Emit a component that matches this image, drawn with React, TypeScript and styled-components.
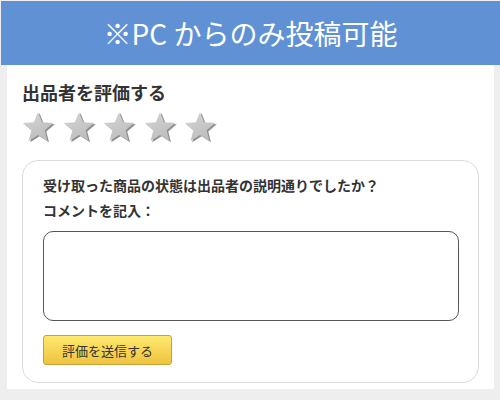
import React from 'react'
import styled, { createGlobalStyle } from 'styled-components'

const GlobalStyle = createGlobalStyle`
  html, body {
    margin: 0;
    padding: 0;
    background-color: #eeeeee;
  }
  body {
    font-family: 'Noto Sans CJK JP', 'Noto Sans', sans-serif;
    color: #333333;
  }
  #root {
    padding-top: 1px;
  }
`

const Header = styled.div`
  margin-left: 1px;
  height: 64px;
  background-color: #6091d4;
  color: #ffffff;
  font-size: 28px;
  line-height: 64px;
  text-align: center;
  letter-spacing: 0;
`

const Panel = styled.div`
  margin: 0 6px 0 7px;
  padding: 15px 15px 6px 15px;
  background-color: #ffffff;
`

const Title = styled.h2`
  margin: 0;
  font-size: 18px;
  line-height: 24px;
  font-weight: bold;
  color: #333333;
`

const Stars = styled.div`
  display: flex;
  gap: 6.5px;
  margin-top: 6px;
  height: 34px;
  align-items: center;
`

const StarButton = styled.button`
  background: transparent;
  border: none;
  padding: 0;
  width: 34px;
  height: 32px;
  cursor: pointer;
  display: flex;
`

const Card = styled.div`
  margin-top: 16px;
  border: 1px solid #dcdcdc;
  border-radius: 16px;
  padding: 14px 19px 17px 20px;
`

const Label = styled.p`
  margin: 0;
  font-size: 14px;
  line-height: 20px;
  font-weight: bold;
  color: #333333;

  & + & {
    margin-top: 5px;
  }
`

const Comment = styled.textarea`
  display: block;
  box-sizing: border-box;
  width: 100%;
  height: 90px;
  margin-top: 11px;
  border: 1px solid #555555;
  border-radius: 10px;
  resize: none;
  outline: none;
  padding: 6px 8px;
  font-family: inherit;
  font-size: 13px;
`

const SubmitButton = styled.button`
  margin-top: 14px;
  width: 129px;
  height: 30px;
  border: 1px solid #c8a13a;
  border-radius: 3px;
  background: linear-gradient(#fdea6e, #f0c340);
  font-family: 'Noto Sans CJK JP', sans-serif;
  font-size: 13px;
  color: #333333;
  cursor: pointer;
  padding: 0;
`

const starPath =
  'M16 1 L20.12 11.34 L31.2 12.06 L22.66 19.16 L25.4 29.94 L16 24 L6.6 29.94 L9.34 19.16 L0.78 12.06 L11.88 11.34 Z'

const Star = ({ id }: { id: number }) => (
  <svg width='34' height='32' viewBox='0 0 34 32'>
    <defs>
      <linearGradient id={`sg${id}`} x1='0' y1='0' x2='0.6' y2='1'>
        <stop offset='0' stopColor='#d6d6d6' />
        <stop offset='1' stopColor='#bdbdbd' />
      </linearGradient>
    </defs>
    <path d={starPath} fill='#8f8f8f' transform='translate(1.6 1.3)' />
    <path d={starPath} fill={`url(#sg${id})`} />
  </svg>
)

const App = () => {
  return (
    <>
      <GlobalStyle />
      <Header>※PC からのみ投稿可能</Header>
      <Panel>
        <Title>出品者を評価する</Title>
        <Stars>
          {[1, 2, 3, 4, 5].map(n => (
            <StarButton type='button' key={n} aria-label={`${n}`}>
              <Star id={n} />
            </StarButton>
          ))}
        </Stars>
        <Card>
          <Label>受け取った商品の状態は出品者の説明通りでしたか？</Label>
          <Label>コメントを記入：</Label>
          <Comment />
          <SubmitButton type='button'>評価を送信する</SubmitButton>
        </Card>
      </Panel>
    </>
  )
}

export default App
